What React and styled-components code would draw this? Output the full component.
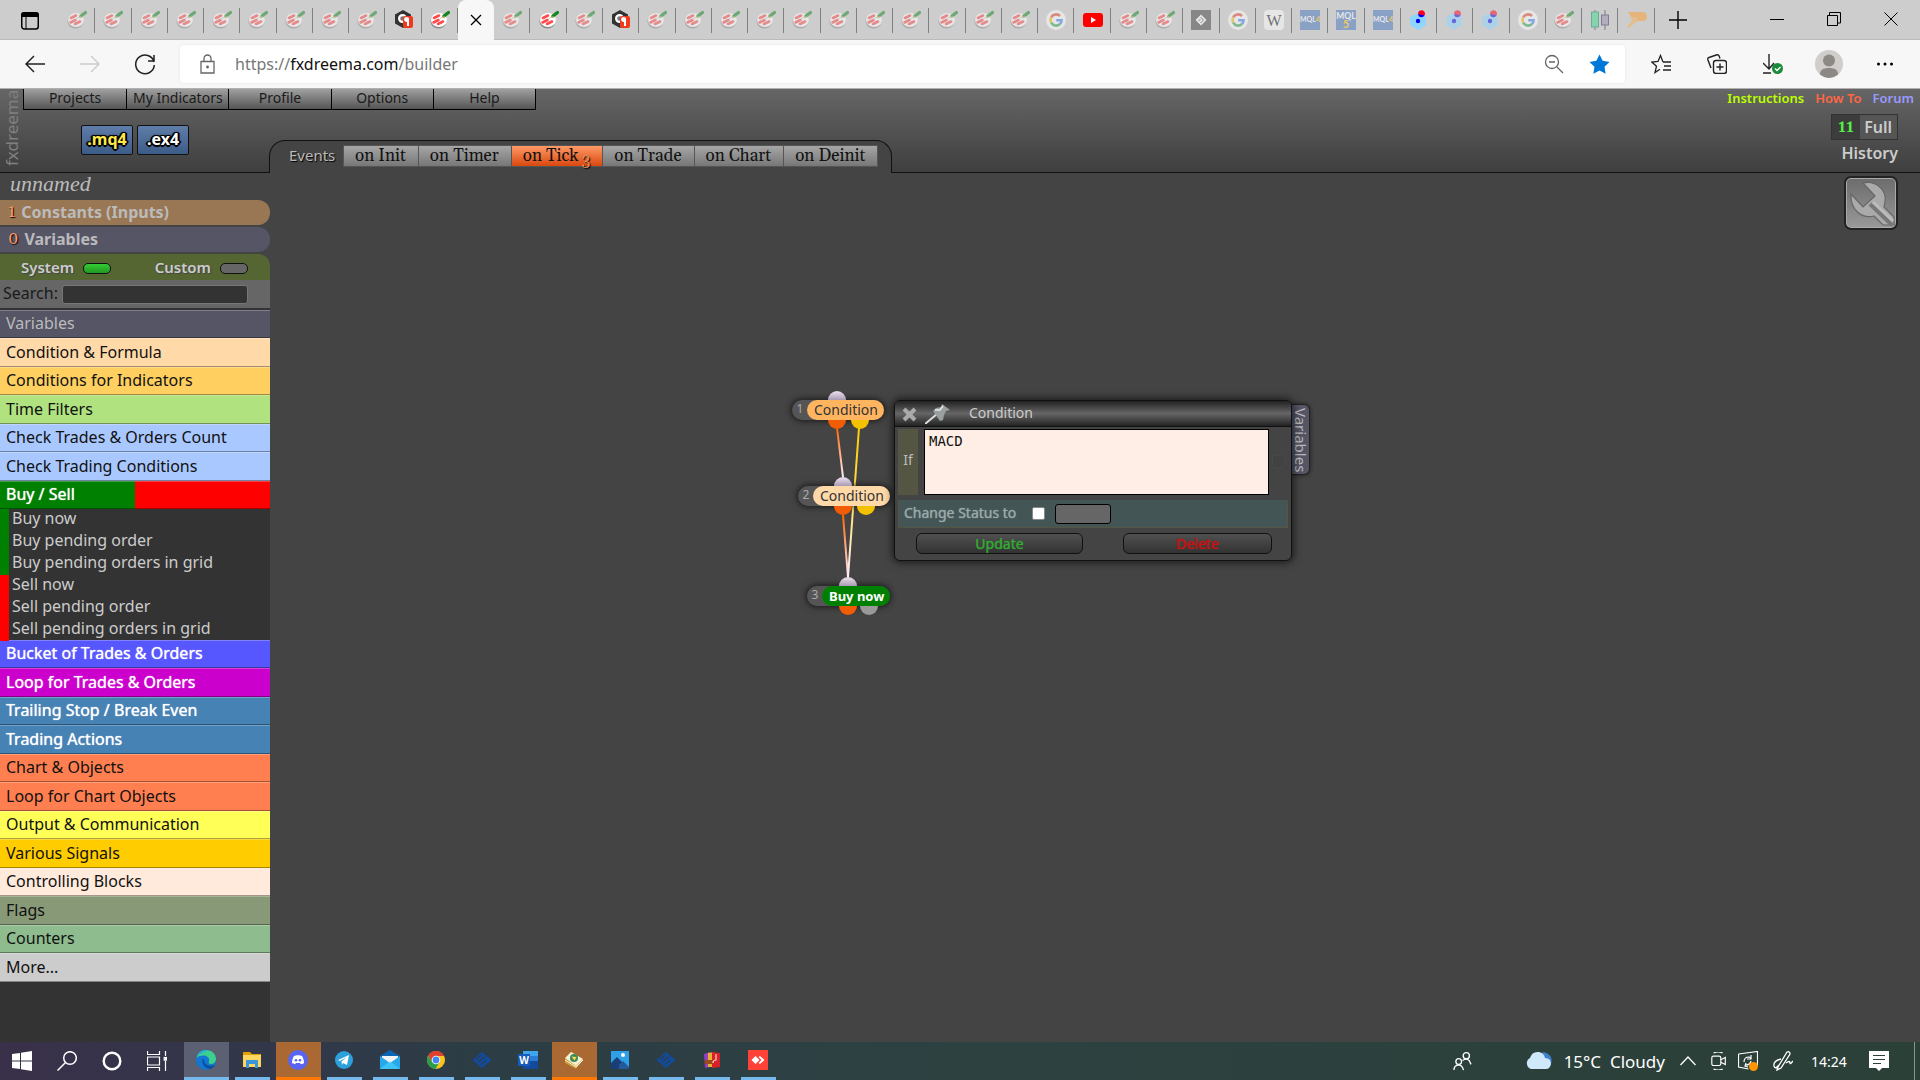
import React from "react";
import styled, { createGlobalStyle, css } from "styled-components";

const sans = `"Noto Sans", "Open Sans", sans-serif`;
const serif = `Georgia, Gelasio, "DejaVu Serif", serif`;

const GlobalStyle = createGlobalStyle`
  *, *::before, *::after { box-sizing: border-box; }
  body { margin: 0; background: #444; font-family: ${sans}; font-size: 14px; color: #bbb; }
  button, input, textarea, select { font: inherit; color: inherit; margin: 0; padding: 0; border: 0; background: none; }
  a { color: inherit; text-decoration: none; }
  ul { margin: 0; padding: 0; list-style: none; }
  svg { display: block; }
`;

const Screen = styled.div`
  min-height: 100vh;
  display: flex;
  flex-direction: column;
  overflow: hidden;
`;

/* ---------- browser chrome ---------- */

const TabStrip = styled.div`
  display: flex;
  height: 40px;
  background: #cdcdcd;
  box-shadow: inset 0 -1px 0 #bbb;
`;
const StripStart = styled.button`
  width: 59px;
  display: flex;
  align-items: center;
  justify-content: center;
  padding-top: 1px;
`;
const Tabs = styled.div`
  flex: 1;
  display: flex;
  min-width: 0;
`;
const Tab = styled.button`
  flex: 1 1 0;
  min-width: 0;
  display: flex;
  align-items: center;
  justify-content: center;
  position: relative;
  &::after {
    content: "";
    position: absolute;
    right: 0;
    top: 8px;
    width: 1px;
    height: 25px;
    background: #808080;
  }
  svg { opacity: ${(p) => (p.$dim ? 0.5 : 1)}; }
  ${(p) => p.$active && css`
    background: #f7f7f7;
    border-radius: 8px 8px 0 0;
    &::after { display: none; }
  `}
`;
const NewTab = styled.button`
  width: 45px;
  display: flex;
  align-items: center;
  justify-content: center;
  padding-bottom: 1px;
`;
const WindowButtons = styled.div`
  display: flex;
  width: 220px;
  padding-left: 48px;
`;
const WindowButton = styled.button`
  width: 57px;
  display: flex;
  align-items: center;
  justify-content: center;
  padding-bottom: 3px;
`;

const Toolbar = styled.div`
  display: flex;
  align-items: center;
  height: 49px;
  background: #f7f7f7;
  border-bottom: 1px solid #b0b0b0;
  padding-right: 7px;
`;
const NavButton = styled.button`
  width: 55px;
  height: 38px;
  display: flex;
  align-items: center;
  justify-content: center;
`;
const NavGroup = styled.div`
  display: flex;
  width: 180px;
  padding-left: 7px;
`;
const AddressBar = styled.div`
  flex: 1;
  height: 38px;
  display: flex;
  align-items: center;
  background: #fff;
  border-radius: 4px;
  padding: 0 15px 0 18px;
  box-shadow: 0 0 3px rgba(0, 0, 0, 0.08);
`;
const Url = styled.a`
  flex: 1;
  padding-left: 17px;
  font-size: 16px;
  color: #777;
  b { font-weight: 400; color: #111; }
`;
const BarIcons = styled.div`
  display: flex;
  gap: 25px;
`;
const PlainButton = styled.button`
  display: flex;
  align-items: center;
  justify-content: center;
`;
const ToolbarIcons = styled.div`
  display: flex;
  padding-left: 8px;
`;
const ToolbarButton = styled.button`
  width: 56px;
  height: 38px;
  display: flex;
  align-items: center;
  justify-content: center;
`;

/* ---------- application header ---------- */

const Header = styled.header`
  display: flex;
  height: 84px;
  background: linear-gradient(#666, #3e3e3e);
`;
const Brand = styled.div`
  width: 23px;
  writing-mode: vertical-rl;
  transform: rotate(180deg);
  border-top: 1px solid #111;
  padding-top: 6px;
  line-height: 23px;
  font-size: 17px;
  color: #808080;
  white-space: nowrap;
  overflow: hidden;
`;
const HeaderMain = styled.div`
  flex: 1;
  display: flex;
  flex-direction: column;
`;
const Menu = styled.nav`
  display: grid;
  grid-template-columns: repeat(5, 1fr);
  width: 513px;
  height: 21px;
  border: 1px solid #000;
  border-top: 0;
`;
const MenuButton = styled.button`
  font-size: 14px;
  line-height: 18px;
  padding-bottom: 2px;
  color: #1a1a1a;
  background: linear-gradient(#a0a0a0, #555);
  & + & { border-left: 1px solid #000; }
`;
const HeaderLower = styled.div`
  flex: 1;
  display: flex;
`;
const ExportTools = styled.div`
  width: 246px;
  display: flex;
  gap: 4px;
  padding: 15px 0 0 58px;
  border-bottom: 1px solid #111;
`;
const ExportButton = styled.button`
  width: 52px;
  height: 30px;
  border: 1px solid #111;
  border-radius: 2px;
  background: linear-gradient(#607da9, #3c5c88);
  color: ${(p) => p.$color};
  font-size: 16px;
  line-height: 26px;
  padding-bottom: 2px;
  font-weight: 700;
  text-shadow: 1px 1px 0 #000, -1px 1px 0 #000, 1px -1px 0 #000, -1px -1px 0 #000, 0 2px 0 #000, 2px 0 0 #000, -2px 0 0 #000, 0 0 3px #000;
`;
const EventBar = styled.div`
  align-self: flex-end;
  height: 33px;
  display: flex;
  padding: 4px 13px 0 19px;
  background: #444;
  border: 1px solid #111;
  border-bottom: 0;
  border-radius: 16px 16px 0 0;
`;
const EventLabel = styled.span`
  width: 54px;
  font-size: 15px;
  line-height: 20px;
  text-shadow: 1px 1px 1px #000;
`;
const EventTabs = styled.div`
  display: flex;
  border: 1px solid #555;
  height: 22px;
`;
const EventTab = styled.button`
  display: flex;
  padding: 0 12px 0 11px;
  font-family: ${serif};
  font-size: 17px;
  line-height: 20px;
  white-space: nowrap;
  color: #111;
  background: ${(p) => (p.$active ? "linear-gradient(#ff9a66, #d9480f)" : "linear-gradient(#a6a6a6, #777)")};
  & + & { border-left: 1px solid #555; }
`;
const EventCount = styled.span`
  margin-left: 3px;
  padding-top: 4px;
  font-size: 16px;
  font-variant-numeric: oldstyle-nums;
  color: #e0905c;
  text-shadow: 1px 1px 1px #000;
`;
const HeaderFill = styled.div`
  flex: 1;
  border-bottom: 1px solid #111;
`;
const HeaderSide = styled.div`
  display: flex;
  flex-direction: column;
  align-items: flex-end;
  border-bottom: 1px solid #111;
  padding-right: 6px;
`;
const HelpLinks = styled.nav`
  display: flex;
  gap: 11px;
  height: 20px;
  font-size: 13px;
  font-weight: 600;
  line-height: 18px;
`;
const HelpLink = styled.a`
  color: ${(p) => p.$color};
`;
const ModeButton = styled.button`
  display: flex;
  height: 26px;
  margin: 5px 16px 0 0;
  border: 1px solid #333;
  background: #555;
  font-weight: 600;
  font-size: 16px;
  line-height: 24px;
  color: #ccc;
  padding-right: 5px;
`;
const ModeCount = styled.span`
  width: 28px;
  margin-right: 4px;
  background: #3c3c3c;
  color: #5e4;
  font-family: ${serif};
  font-size: 17px;
  font-variant-numeric: oldstyle-nums;
`;
const HistoryButton = styled.button`
  margin-right: 16px;
  font-size: 16px;
  font-weight: 600;
  line-height: 26px;
  color: #ccc;
`;

/* ---------- workspace ---------- */

const Workspace = styled.div`
  flex: 1;
  display: flex;
`;
const Sidebar = styled.aside`
  width: 270px;
  background: #333;
`;
const ProjectName = styled.div`
  height: 27px;
  padding-left: 10px;
  background: #444;
  font-family: "Monotype Corsiva", "Liberation Serif", serif;
  font-style: italic;
  font-size: 22px;
  line-height: 22px;
  color: #bbb;
`;
const Sections = styled.div`
  background: #444;
`;
const SectionButton = styled.button`
  display: flex;
  width: 100%;
  height: 25px;
  margin-bottom: 2px;
  padding-left: 8px;
  gap: 6px;
  border-radius: 0 12px 12px 0;
  background: ${(p) => p.$bg};
  font-size: 16px;
  font-weight: 700;
  line-height: 24px;
`;
const SectionCount = styled.span`
  font-family: ${serif};
  font-size: 17px;
  font-weight: 400;
  font-variant-numeric: oldstyle-nums;
  color: #ff9966;
  text-shadow: 1px 1px 1px #000;
`;
const Sources = styled.div`
  display: flex;
  justify-content: space-between;
  height: 26px;
  padding: 0 22px 0 21px;
  border-top-right-radius: 12px;
  background: #563;
`;
const Source = styled.button`
  display: flex;
  align-items: center;
  gap: 9px;
  font-size: 15px;
  font-weight: 600;
  line-height: 26px;
  color: #ccc;
  text-shadow: 1px 1px 1px #444;
`;
const Lamp = styled.span`
  width: 28px;
  height: 11px;
  margin-top: 3px;
  border: 1px solid #111;
  border-radius: 5px;
  background: ${(p) => (p.$on ? "linear-gradient(#3c3, #292)" : "#666")};
`;
const SearchRow = styled.label`
  display: flex;
  align-items: center;
  gap: 4px;
  height: 28px;
  padding-left: 3px;
  background: #666;
  font-size: 16px;
  line-height: 22px;
  color: #1a1a1a;
`;
const SearchLabel = styled.span`
  padding-bottom: 2px;
`;
const SearchInput = styled.input`
  width: 186px;
  height: 19px;
  border: 1px solid #777;
  border-radius: 3px;
  background: #333;
`;
const Categories = styled.ul`
  & > li:nth-child(odd) { height: 28px; }
  & > li:nth-child(even) { height: 29px; }
`;
const FirstCategories = styled(Categories)`
  margin-top: 2px;
`;
const Category = styled.button`
  display: block;
  width: 100%;
  height: 100%;
  padding: 0 0 2px 6px;
  text-align: left;
  font-size: 16px;
  line-height: 24px;
  background: ${(p) => p.$bg};
  color: ${(p) => p.$color || "#111"};
  text-shadow: ${(p) => (p.$color === "#fff" ? "0 0 1px #fff" : "none")};
  border-top: 1px solid rgba(255, 255, 255, 0.25);
  border-bottom: 1px solid rgba(0, 0, 0, 0.35);
`;
const SubItems = styled.ul`
  display: grid;
  grid-template-rows: repeat(6, 1fr);
  height: 131px;
`;
const SubItem = styled.button`
  display: block;
  width: 100%;
  height: 100%;
  border-left: 9px solid ${(p) => p.$side};
  padding: 0 0 4px 3px;
  text-align: left;
  font-size: 16px;
  line-height: 18px;
  color: #ccc;
`;

const Canvas = styled.main`
  flex: 1;
  position: relative;
  background: #444;
`;
const Wires = styled.svg`
  position: absolute;
  left: 0;
  top: 0;
  width: 100%;
  height: 100%;
`;
const SettingsButton = styled.button`
  position: absolute;
  right: 22px;
  top: 3px;
  width: 54px;
  height: 54px;
  border: 2px solid #222;
  border-radius: 7px;
  background: linear-gradient(#6c6c6c, #999);
  box-shadow: inset 0 0 0 1px #aaa;
`;
const Node = styled.div`
  position: absolute;
  left: ${(p) => p.$x}px;
  top: ${(p) => p.$y}px;
  display: flex;
  height: 20px;
  border-radius: 10px;
  background: #555;
  box-shadow: 0 0 6px 1px rgba(0, 0, 0, 0.65);
`;
const NodeNumber = styled.span`
  width: 15px;
  padding-left: 1px;
  text-align: center;
  font-size: 12px;
  line-height: 18px;
  color: #aaa;
`;
const NodeLabel = styled.button`
  position: relative;
  padding: 0 6px 1px 7px;
  border-radius: 10px;
  background: ${(p) => p.$bg};
  color: ${(p) => p.$color || "#333"};
  font-size: ${(p) => (p.$strong ? 13 : 14)}px;
  line-height: 18px;
  font-weight: ${(p) => (p.$strong ? 700 : 400)};
  white-space: nowrap;
`;
const Knob = styled.span`
  position: absolute;
  left: ${(p) => p.$x}px;
  ${(p) => (p.$in ? "top: -9px; border-radius: 9px 9px 0 0;" : "top: 20px; border-radius: 0 0 9px 9px;")}
  width: 18px;
  height: 9px;
  background: ${(p) => p.$bg};
`;

const Panel = styled.section`
  position: absolute;
  left: 624px;
  top: 227px;
  width: 398px;
  border: 1px solid #111;
  border-radius: 6px;
  background: #444;
  box-shadow: 0 0 8px 1px rgba(0, 0, 0, 0.7);
`;
const PanelHeader = styled.div`
  display: flex;
  align-items: center;
  height: 26px;
  padding-left: 7px;
  border-bottom: 1px solid #111;
  border-radius: 5px 5px 0 0;
  background: linear-gradient(#222, #666 50%, #222);
`;
const PanelTitle = styled.h2`
  margin: 0 0 0 19px;
  padding-bottom: 2px;
  font-size: 14px;
  font-weight: 400;
  line-height: 22px;
  color: #ccc;
`;
const CloseButton = styled(PlainButton)`
  margin-right: 8px;
`;
const Condition = styled.label`
  display: flex;
  align-items: center;
  height: 67px;
  margin: 1px 0 0 3px;
  gap: 6px;
`;
const IfLabel = styled.span`
  width: 20px;
  height: 66px;
  background: #554;
  text-align: center;
  line-height: 62px;
`;
const ConditionText = styled.textarea`
  display: block;
  width: 345px;
  height: 66px;
  padding: 2px 4px;
  border: 1px solid #000;
  background: #ffeee6;
  color: #111;
  resize: none;
  font-family: "DejaVu Sans Mono", monospace;
  font-size: 14px;
  line-height: 18px;
`;
const GhostBox = styled.span`
  width: 13px;
  height: 13px;
  margin-left: -3px;
  border: 1px solid #484848;
  background: #424242;
  border-radius: 2px;
`;
const StatusRow = styled.div`
  display: flex;
  align-items: center;
  height: 28px;
  margin: 5px 3px 0;
  padding-left: 5px;
  border: 1px solid #554;
  border-top: 0;
  background: #455;
`;
const StatusLabel = styled.label`
  width: 128px;
  padding-bottom: 2px;
  color: #9aa;
  line-height: 24px;
  text-shadow: 0 0 1px #9aa;
`;
const StatusCheck = styled.input`
  appearance: none;
  width: 13px;
  height: 13px;
  margin-right: 10px;
  background: #fff;
  border: 1px solid #888;
  border-radius: 2px;
`;
const StatusSelect = styled.select`
  appearance: none;
  width: 56px;
  height: 20px;
  border: 1px solid #000;
  border-radius: 3px;
  background: #666;
`;
const PanelActions = styled.div`
  display: flex;
  justify-content: space-between;
  padding: 5px 19px 6px 21px;
`;
const ActionButton = styled.button`
  width: ${(p) => (p.$wide ? 167 : 149)}px;
  height: 21px;
  border: 1px solid #111;
  border-radius: 6px;
  background: linear-gradient(#505050, #333);
  color: ${(p) => p.$color};
  line-height: 19px;
  text-shadow: 0 0 1px ${(p) => p.$color};
`;
const SideTab = styled.button`
  position: absolute;
  left: 1022px;
  top: 231px;
  width: 18px;
  height: 71px;
  padding-top: 1px;
  border: 1px solid #222;
  border-left: 0;
  border-radius: 0 6px 6px 0;
  background: #556;
  box-shadow: 0 0 4px rgba(0, 0, 0, 0.6);
  writing-mode: vertical-rl;
  font-size: 15px;
  line-height: 16px;
  white-space: nowrap;
`;

/* ---------- taskbar ---------- */

const Taskbar = styled.footer`
  display: flex;
  height: 38px;
  background: linear-gradient(90deg, #393049, #31384a 15%, #2c3d45 25%, #2d4141 50%, #2b4037);
  color: #fff;
`;
const SystemButtons = styled.div`
  display: flex;
  width: 184px;
  padding: 0 5px 0 0;
`;
const SystemButton = styled.button`
  flex: 1;
  display: flex;
  align-items: center;
  justify-content: center;
  padding-bottom: 1px;
`;
const Apps = styled.div`
  display: flex;
  gap: 1px;
`;
const AppButton = styled.button`
  width: 45px;
  display: flex;
  flex-direction: column;
  align-items: center;
  justify-content: space-between;
  padding-top: 8px;
  background: ${(p) => (p.$state === "current" ? "#5b6072" : p.$state === "alert" ? "#aa6932" : "transparent")};
  svg { margin-right: 2px; }
  &::after {
    content: "";
    width: ${(p) => (p.$state ? 45 : 35)}px;
    height: 3px;
    background: ${(p) => (p.$state === "alert" ? "#ff7700" : "#76b9ed")};
  }
`;
const Tray = styled.div`
  margin-left: auto;
  display: flex;
  align-items: center;
  padding-right: 5px;
`;
const TrayItem = styled.button`
  width: ${(p) => p.$w}px;
  display: flex;
  align-items: center;
  justify-content: center;
  white-space: nowrap;
`;
const Weather = styled.button`
  display: flex;
  align-items: center;
  gap: 12px;
  font-size: 17px;
  padding: 0 3px 0 52px;
`;
const Clock = styled.time`
  width: 58px;
  text-align: center;
  font-size: 14px;
`;
const ShowDesktop = styled.button`
  width: 1px;
  height: 38px;
  margin-left: 14px;
  background: #8a958f;
`;

/* ---------- drawings ---------- */

const Line = ({ s = 20, vb = 20, w = 1.5, c = "#222", children }) => (
  <svg width={s} height={s} viewBox={`0 0 ${vb} ${vb}`} fill="none" stroke={c} strokeWidth={w}>{children}</svg>
);

const Fx = () => (
  <svg width="20" height="20" viewBox="0 0 20 20">
    <ellipse cx="8.500" cy="11.500" rx="8" ry="7" fill="#8a8a8a" />
    <ellipse cx="9" cy="10" rx="8" ry="7" fill="#fff" />
    <path d="M4 8 9 5.500M3.500 12.500l5-2.500M8 14l5-2.500" stroke="#ff4b4b" strokeWidth="2.600" strokeLinecap="round" />
    <path d="m9 9.500 5-4" stroke="#ccc" strokeWidth="1" />
    <path d="m14 6 4.500-3.500" stroke="#12851f" strokeWidth="3.200" strokeLinecap="round" />
    <path d="m12 7.800 2.500-1.300" stroke="#e8c040" strokeWidth="1" />
  </svg>
);
const HexMark = () => (
  <svg width="20" height="20" viewBox="0 0 20 20">
    <path d="M9 0 17 4.500v9L9 18 1 13.500v-9Z" fill="#333" />
    <circle cx="8.500" cy="8.500" r="3.400" fill="#777" stroke="#fff" strokeWidth="2.200" />
    <path d="M9 8q0-2 2-2h6q2 0 2 2v8q0 2-2 2h-6q-2 0-2-2Z" fill="#f03a20" />
    <circle cx="12.500" cy="9.500" r="2.400" fill="#fff" /><path d="M14 8v8" stroke="#fff" strokeWidth="2" />
  </svg>
);
const Google = () => (
  <svg width="20" height="20" viewBox="0 0 20 20" fill="none" strokeWidth="2.600">
    <circle cx="10" cy="10" r="10" fill="#fff" />
    <path d="M14 6A5.600 5.600 0 0 0 5.200 7.300" stroke="#ea4335" />
    <path d="M5.200 7.300a5.600 5.600 0 0 0 0 5.400" stroke="#fbbc05" />
    <path d="M5.200 12.700a5.600 5.600 0 0 0 8.500 1.600" stroke="#34a853" />
    <path d="M13.700 14.300a5.600 5.600 0 0 0 1.900-4.100H10.200" stroke="#4285f4" />
  </svg>
);
const YouTube = () => (
  <svg width="20" height="20" viewBox="0 0 20 20"><rect y="3" width="20" height="14" rx="3" fill="#f00" /><path d="m8 7 5 3-5 3Z" fill="#fff" /></svg>
);
const Diamond = () => (
  <svg width="20" height="20" viewBox="0 0 20 20"><rect width="20" height="20" fill="#444" /><path d="m10 4.500 5.500 5.500-5.500 5.500L4.500 10Z" fill="#fff" /><path d="m9.500 7 3 3-3 3M9.500 9l-2 2" stroke="#444" fill="none" /></svg>
);
const Wiki = () => (
  <svg width="20" height="20" viewBox="0 0 20 20"><rect width="20" height="20" rx="4" fill="#fff" /><text x="10" y="15.500" fontSize="16" fontFamily="Liberation Serif" textAnchor="middle" fill="#111">W</text></svg>
);
const Mql4 = () => (
  <svg width="20" height="20" viewBox="0 0 20 20"><rect width="20" height="20" fill="#4a76c0" /><text x="10" y="12" fontSize="7" fontWeight="700" fontFamily="Lato" textAnchor="middle" fill="#fff">MQL<tspan fill="#ffc400">4</tspan></text></svg>
);
const Mql5 = () => (
  <svg width="20" height="20" viewBox="0 0 20 20"><rect width="20" height="20" fill="#4a76c0" /><text x="10" y="8.500" fontSize="8.500" fontWeight="700" fontFamily="Lato" textAnchor="middle" fill="#fff">MQL</text><text x="10" y="18" fontSize="11" fontWeight="700" fontFamily="Lato" textAnchor="middle" fill="#ffc400">5</text></svg>
);
const Hexagon = () => (
  <svg width="20" height="20" viewBox="0 0 20 20"><path d="m9 3 8 4v8l-8 5-8-5V7Z" fill="#8fd6ff" /><path d="M9 4.500a3.500 3.500 0 0 0 6.500 1L12 3Z" fill="#00e" /><path d="M9 4a3.500 3.500 0 1 1 6.500 1.500Z" fill="#f02" /><circle cx="9" cy="11" r="2.200" fill="#00e" /></svg>
);
const Candles = () => (
  <svg width="20" height="20" viewBox="0 0 20 20"><path d="M5 0v20M15 0v20" stroke="#333" /><rect x="1.500" y="2" width="7" height="15" fill="#3ddc91" stroke="#186" /><rect x="11.500" y="5" width="7" height="10" fill="#9a8fb0" stroke="#335" /></svg>
);
const Ribbon = () => (
  <svg width="20" height="20" viewBox="0 0 20 20"><path d="M1 2h14q5 0 5 4.500T15 11h-4l-2-4H4Z" fill="#ff9b2e" /><path d="M4 7h5l2 4-3 2-6 5-2-2 5-5Z" fill="#f9b050" /></svg>
);

const f = (icon, dim = true) => ({ icon, dim });
const times = (n, icon) => Array.from({ length: n }, () => f(icon));
const tabs = [
  ...times(9, Fx), f(HexMark, false), f(Fx, false), { active: true },
  f(Fx), f(Fx, false), f(Fx), f(HexMark, false), ...times(11, Fx),
  f(Google), f(YouTube, false), f(Fx), f(Fx), f(Diamond), f(Google), f(Wiki),
  f(Mql4), f(Mql5), f(Mql4), f(Hexagon, false), f(Hexagon), f(Hexagon),
  f(Google), f(Fx), f(Candles), f(Ribbon),
];

const upper = [
  ["Variables", "#556", "#bbb"],
  ["Condition & Formula", "#ffd9a8"],
  ["Conditions for Indicators", "#ffd060"],
  ["Time Filters", "#b0e380"],
  ["Check Trades & Orders Count", "#a9c8ff"],
  ["Check Trading Conditions", "#a9c8ff"],
  ["Buy / Sell", "linear-gradient(90deg, #008000 50%, #f00 50%)", "#fff"],
];
const subItems = [
  ["Buy now", "green"], ["Buy pending order", "green"], ["Buy pending orders in grid", "green"],
  ["Sell now", "red"], ["Sell pending order", "red"], ["Sell pending orders in grid", "red"],
];
const lower = [
  ["Bucket of Trades & Orders", "#5757ff", "#fff"],
  ["Loop for Trades & Orders", "#c0c", "#fff"],
  ["Trailing Stop / Break Even", "#4682b4", "#fff"],
  ["Trading Actions", "#4682b4", "#fff"],
  ["Chart & Objects", "#ff7f50"],
  ["Loop for Chart Objects", "#ff7f50"],
  ["Output & Communication", "#ffff57"],
  ["Various Signals", "#fc0"],
  ["Controlling Blocks", "#ffeadc"],
  ["Flags", "#897"],
  ["Counters", "#8fbc8f"],
  ["More...", "#ccc"],
];

const BlueDiamond = () => (
  <svg width="20" height="20" viewBox="0 0 20 20"><path d="m10 2 9.500 8-9.500 8-9.500-8Z" fill="#124aa0" /><path d="m4 9.500 5-4M6 12l7-5.500M9 14.500l5-4" stroke="#2d3f45" strokeWidth="1.200" fill="none" /></svg>
);
const apps = [
  ["Edge", "current", () => (
    <svg width="20" height="20" viewBox="0 0 20 20">
      <circle cx="10" cy="10" r="10" fill="#1177d0" />
      <path d="M.5 8C2 2 6 0 10 0c6 0 10 4 10 9 0 3-2.500 5-5 5-2 0-3-1-2-2.500C14 8 11 5.500 7.500 5.500 4 5.500 1.500 6.500.5 8Z" fill="#3ccf8e" />
      <path d="M.5 8C2 2 6 0 10 0l3 .5C8 1 3 4 .5 8Z" fill="#29a8e0" />
      <path d="M7 8c-2 5 1 10 7 11 2-.6 4-2 5-4-5 2-11 0-11-5Z" fill="#0c4fa0" />
    </svg>)],
  ["Explorer", "", () => (
    <svg width="20" height="20" viewBox="0 0 20 20"><path d="M1 2h7l2 2h9v4H1Z" fill="#e0a100" /><path d="M1 5h18v12H1Z" fill="#ffd75e" /><path d="M4 18v-8h12v8h-3v-4H7v4Z" fill="#3a96dd" /></svg>)],
  ["Discord", "alert", () => (
    <svg width="20" height="20" viewBox="0 0 20 20"><circle cx="10" cy="10" r="10" fill="#5865f2" /><path d="M6 6c2-1 6-1 8 0 1.500 2 2 5 2 7-1 1-2 1-3 1.200L12 13H8l-1 1.200C6 14 5 14 4 13c0-2 .5-5 2-7Z" fill="#fff" /><circle cx="8" cy="10.200" r="1.300" fill="#5865f2" /><circle cx="12" cy="10.200" r="1.300" fill="#5865f2" /></svg>)],
  ["Telegram", "", () => (
    <svg width="20" height="20" viewBox="0 0 20 20"><circle cx="10" cy="10" r="9" fill="#2ba0da" /><path d="m4 10 11-5-2 10-4-2-1 2-.5-3.500L13 7l-7 4Z" fill="#fff" /></svg>)],
  ["Mail", "", () => (
    <svg width="20" height="20" viewBox="0 0 20 20"><path d="m0 6 10-6 10 6v13H0Z" fill="#0a64b4" /><path d="M2 6h16v7H2Z" fill="#f3f3f3" /><path d="m0 6 10 7 10-7v13H0Z" fill="#28a8ea" /><path d="m0 19 10-8 10 8Z" fill="#50d9ff" opacity=".55" /></svg>)],
  ["Chrome", "", () => (
    <svg width="20" height="20" viewBox="0 0 20 20"><circle cx="10" cy="10" r="9" fill="#fbc31c" /><path d="M2.200 5.500A9 9 0 0 1 18 6h-8l-4 6Z" fill="#e0402f" /><path d="M2.200 5.500A9 9 0 0 0 9.500 19l4-7H6Z" fill="#2a9d4c" /><circle cx="10" cy="10" r="4.300" fill="#fff" /><circle cx="10" cy="10" r="3.400" fill="#4285f4" /></svg>)],
  ["Trader", "", BlueDiamond],
  ["Word", "", () => (
    <svg width="20" height="20" viewBox="0 0 20 20"><path d="M5 1h15v5H5Z" fill="#41a5ee" /><path d="M5 6h15v5H5Z" fill="#2b7cd3" /><path d="M5 11h15v8H5Z" fill="#134a9c" /><rect y="4" width="12" height="12" fill="#185abd" /><text x="6" y="13.500" fontSize="10" fontWeight="700" fontFamily="Open Sans" textAnchor="middle" fill="#fff">W</text></svg>)],
  ["MetaEditor", "alert", () => (
    <svg width="20" height="20" viewBox="0 0 20 20"><path d="m1 9 7-7 11 8-7 9L1 13Z" fill="#c99a3a" /><path d="m1 8 6-6 12 7-7 7Z" fill="#f6efd0" /><path d="m1 10 11 7 7-7" stroke="#fff8dc" fill="none" /><circle cx="10" cy="8" r="4" fill="#388a5a" /><path d="m7.500 6.500 5 .5-2 3.500Z" fill="#ffd84a" /></svg>)],
  ["Photos", "", () => (
    <svg width="20" height="20" viewBox="0 0 20 20"><path d="M1 1h18v18H1Z" fill="#2f9fe8" /><circle cx="13" cy="5" r="2" fill="#fff" /><path d="m1 13 6-6 12 12H1Z" fill="#1a3e78" /><path d="m9 15 4-4 6 6v2H9Z" fill="#245a9c" /></svg>)],
  ["Trader two", "", BlueDiamond],
  ["Archive", "", () => (
    <svg width="20" height="20" viewBox="0 0 20 20"><path d="m2 4 6-2v15l-5 1Z" fill="#9040c0" /><path d="m6 3 6-1v15H6Z" fill="#e8b030" /><path d="m10 2 8 1v14l-8 1Z" fill="#d8202a" /><path d="M3 10h8v4H3Z" fill="#a04818" /><path d="M14 4v6q-3 0-3 3" stroke="#f8d8b0" strokeWidth="1.200" fill="none" /></svg>)],
  ["AnyDesk", "", () => (
    <svg width="20" height="20" viewBox="0 0 20 20"><rect width="20" height="20" fill="#ff4238" /><path d="m7.500 6 4 4-4 4-4-4ZM10.500 7l1.500-1 4.500 4-4.500 4-1.500-1 3-3Z" fill="#fff" /></svg>)],
];

const lilac = "linear-gradient(#f0e2f4, #aa9cb0)";

export default function App() {
  return (
    <Screen>
      <GlobalStyle />
      <TabStrip>
        <StripStart aria-label="Tab actions">
          <svg width="20" height="20" viewBox="0 0 20 20"><rect x="1.750" y="2" width="16.500" height="16" rx="2.500" fill="none" stroke="#000" strokeWidth="1.500" /><path d="M1 6V4q0-3 3-3h12q3 0 3 3v2Z" /><path d="M6 6v12" stroke="#000" /></svg>
        </StripStart>
        <Tabs>
          {tabs.map((t, i) => (
            <Tab key={i} $active={t.active} $dim={t.dim} aria-label={`Tab ${i + 1}`}>
              {t.active ? <Line s={12} vb={12} c="#000" w={1.300}><path d="m1 1 10 10M11 1 1 11" /></Line> : <t.icon />}
            </Tab>
          ))}
        </Tabs>
        <NewTab aria-label="New tab"><Line s={18} vb={18} c="#000" w={1.400}><path d="M9 0v18M0 9h18" /></Line></NewTab>
        <WindowButtons>
          <WindowButton aria-label="Minimise"><Line s={14} vb={14} c="#000" w={1}><path d="M0 7.500h14" /></Line></WindowButton>
          <WindowButton aria-label="Restore"><Line s={14} vb={14} c="#000" w={1}><path d="M.5 3.500h10v10H.5ZM2.500 3V.5h11v10.500H11" /></Line></WindowButton>
          <WindowButton aria-label="Close"><Line s={14} vb={14} c="#000" w={1}><path d="m.5.5 13 13M13.500.5l-13 13" /></Line></WindowButton>
        </WindowButtons>
      </TabStrip>

      <Toolbar>
        <NavGroup>
          <NavButton aria-label="Back"><Line><path d="M20 10H1M9 2l-8 8 8 8" /></Line></NavButton>
          <NavButton aria-label="Forward"><Line c="#ccc"><path d="M0 10h19M11 2l8 8-8 8" /></Line></NavButton>
          <NavButton aria-label="Reload"><Line s={22} vb={22}><path d="M20 9a9.300 9.300 0 1 0 .3 3M20 2v6h-6" /></Line></NavButton>
        </NavGroup>
        <AddressBar>
          <Line c="#666" w={1.300}><path d="M3 7.500h13v11.500H3ZM6 7V4.500a3.500 3.500 0 0 1 7 0V7" /><circle cx="9.500" cy="13" r=".8" fill="#666" /></Line>
          <Url href="https://fxdreema.com/builder">https://<b>fxdreema.com</b>/builder</Url>
          <BarIcons>
            <PlainButton aria-label="Zoom out"><Line c="#666" w={1.300}><circle cx="8" cy="8" r="6.500" /><path d="m13 13 6 6M5 8h6" /></Line></PlainButton>
            <PlainButton aria-label="Favourite"><svg width="21" height="21" viewBox="0 0 20 20"><path d="m10 .5 3 6 6.500 1-4.700 4.700 1 6.600L10 15.700l-5.800 3.100 1-6.600L.5 7.500l6.500-1Z" fill="#0078d7" /></svg></PlainButton>
          </BarIcons>
        </AddressBar>
        <ToolbarIcons>
          <ToolbarButton aria-label="Favourites"><Line w={1.300}><path d="M12 8 9.500 1.500 7 7.500.8 8l4.700 4.200L4 18.500l5-3.200M12 8h8M13 12h7M12 16h8" /></Line></ToolbarButton>
          <ToolbarButton aria-label="Collections"><Line w={1.400}><rect x="6.500" y="6.500" width="13" height="13" rx="2.500" /><path d="M13 9.500v7M9.500 13h7M4 14 .8 5.500Q.5 4 2 3.500L10 .8q1.500-.3 2 1l1 2.700" /></Line></ToolbarButton>
          <ToolbarButton aria-label="Downloads"><Line w={1.400}><path d="M6 0v15M0 9l6 6 5-6M0 19h8" /><circle cx="14.500" cy="14.500" r="5.500" fill="#1b8a3a" stroke="none" /><path d="m12 14.500 2 2 3.500-3.500" stroke="#fff" /></Line></ToolbarButton>
          <ToolbarButton aria-label="Profile"><svg width="28" height="28" viewBox="0 0 28 28"><circle cx="14" cy="14" r="14" fill="#d0cecb" /><circle cx="14" cy="10.500" r="6" fill="#8c8884" /><path d="M5 24.500C5 20 8 18 14 18s9 2 9 6.500q-9 7-18 0Z" fill="#8c8884" /></svg></ToolbarButton>
          <ToolbarButton aria-label="Menu"><svg width="18" height="4" viewBox="0 0 18 4"><circle cx="2.500" cy="2" r="1.500" /><circle cx="9" cy="2" r="1.500" /><circle cx="15.500" cy="2" r="1.500" /></svg></ToolbarButton>
        </ToolbarIcons>
      </Toolbar>

      <Header>
        <Brand>fxdreema</Brand>
        <HeaderMain>
          <Menu>
            {["Projects", "My Indicators", "Profile", "Options", "Help"].map((m) => <MenuButton key={m}>{m}</MenuButton>)}
          </Menu>
          <HeaderLower>
            <ExportTools>
              <ExportButton $color="#ffe94a">.mq4</ExportButton>
              <ExportButton $color="#fff">.ex4</ExportButton>
            </ExportTools>
            <EventBar>
              <EventLabel>Events</EventLabel>
              <EventTabs>
                <EventTab>on Init</EventTab>
                <EventTab>on Timer</EventTab>
                <EventTab $active>on Tick<EventCount>3</EventCount></EventTab>
                <EventTab>on Trade</EventTab>
                <EventTab>on Chart</EventTab>
                <EventTab>on Deinit</EventTab>
              </EventTabs>
            </EventBar>
            <HeaderFill />
          </HeaderLower>
        </HeaderMain>
        <HeaderSide>
          <HelpLinks>
            <HelpLink href="#instructions" $color="#bf0">Instructions</HelpLink>
            <HelpLink href="#howto" $color="#f64">How To</HelpLink>
            <HelpLink href="#forum" $color="#99f">Forum</HelpLink>
          </HelpLinks>
          <ModeButton><ModeCount>11</ModeCount>Full</ModeButton>
          <HistoryButton>History</HistoryButton>
        </HeaderSide>
      </Header>

      <Workspace>
        <Sidebar>
          <ProjectName>unnamed</ProjectName>
          <Sections>
            <SectionButton $bg="#975"><SectionCount>1</SectionCount>Constants (Inputs)</SectionButton>
            <SectionButton $bg="#556"><SectionCount>0</SectionCount>Variables</SectionButton>
            <Sources>
              <Source>System<Lamp $on /></Source>
              <Source>Custom<Lamp /></Source>
            </Sources>
          </Sections>
          <SearchRow><SearchLabel>Search:</SearchLabel><SearchInput type="text" /></SearchRow>
          <FirstCategories>
            {upper.map(([t, bg, c]) => <li key={t}><Category $bg={bg} $color={c}>{t}</Category></li>)}
          </FirstCategories>
          <SubItems>
            {subItems.map(([t, side]) => <li key={t}><SubItem $side={side}>{t}</SubItem></li>)}
          </SubItems>
          <Categories>
            {lower.map(([t, bg, c]) => <li key={t}><Category $bg={bg} $color={c}>{t}</Category></li>)}
          </Categories>
        </Sidebar>

        <Canvas>
          <Wires>
            <defs>
              <linearGradient id="w1" gradientUnits="userSpaceOnUse" x1="0" y1="255" x2="0" y2="304"><stop offset="0" stopColor="#f60" /><stop offset="1" stopColor="#fef" /></linearGradient>
              <linearGradient id="w2" gradientUnits="userSpaceOnUse" x1="0" y1="255" x2="0" y2="404"><stop offset="0" stopColor="#fc0" /><stop offset=".4" stopColor="#fd4" /><stop offset="1" stopColor="#fef" /></linearGradient>
              <linearGradient id="w3" gradientUnits="userSpaceOnUse" x1="0" y1="342" x2="0" y2="404"><stop offset="0" stopColor="#f60" /><stop offset="1" stopColor="#fef" /></linearGradient>
            </defs>
            <g fill="none" strokeWidth="2">
              <path d="m567 255 6 49" stroke="url(#w1)" />
              <path d="m589 255-11 149" stroke="url(#w2)" />
              <path d="m573 342 5 62" stroke="url(#w3)" />
            </g>
          </Wires>
          <Node $x={522} $y={227}>
            <Knob $in $x={36} $bg={lilac} /><Knob $x={36} $bg="#f25c05" /><Knob $x={59} $bg="#f2c200" />
            <NodeNumber>1</NodeNumber><NodeLabel $bg="#ffb560">Condition</NodeLabel>
          </Node>
          <Node $x={528} $y={313}>
            <Knob $in $x={36} $bg={lilac} /><Knob $x={36} $bg="#f25c05" /><Knob $x={59} $bg="#f2c200" />
            <NodeNumber>2</NodeNumber><NodeLabel $bg="#ffd9a8">Condition</NodeLabel>
          </Node>
          <Node $x={537} $y={413}>
            <Knob $in $x={32} $bg={lilac} /><Knob $x={32} $bg="#f25c05" /><Knob $x={53} $bg="#999" />
            <NodeNumber>3</NodeNumber><NodeLabel $bg="#008000" $color="#fff" $strong>Buy now</NodeLabel>
          </Node>

          <SideTab>Variables</SideTab>
          <Panel>
            <PanelHeader>
              <CloseButton aria-label="Close"><svg width="15" height="16" viewBox="0 0 15 16"><path d="m2 3 11 11M13 3 2 14" stroke="#aaa" strokeWidth="4" /></svg></CloseButton>
              <PlainButton aria-label="Pin"><svg width="25" height="20" viewBox="0 0 25 20"><path d="m0 20 12-10" stroke="#ddd" strokeWidth="2" /><path d="m8 7 3-3 5-1 1-3 8 6-4 1-2 4-1 5-3 1Z" fill="#9aa0a0" /><path d="m10 6 5 0 3-4" stroke="#e4e8e8" strokeWidth="1.500" fill="none" /></svg></PlainButton>
              <PanelTitle>Condition</PanelTitle>
            </PanelHeader>
            <Condition><IfLabel>If</IfLabel><ConditionText defaultValue="MACD" spellCheck={false} /><GhostBox /></Condition>
            <StatusRow>
              <StatusLabel htmlFor="status-on">Change Status to</StatusLabel>
              <StatusCheck id="status-on" type="checkbox" />
              <StatusSelect aria-label="Status" />
            </StatusRow>
            <PanelActions>
              <ActionButton $wide $color="#3a3">Update</ActionButton>
              <ActionButton $color="#c11">Delete</ActionButton>
            </PanelActions>
          </Panel>

          <SettingsButton aria-label="Settings">
            <svg width="50" height="50" viewBox="0 0 50 50">
              <path d="M17 5c12-3 24 6 22 19l-1 5 10 10v8H37l-9-9c-11 3-24-5-23-22l12 13 12-11Z" fill="#aaa" stroke="#666" strokeWidth="1.200" />
              <path d="m24 26 22 21" stroke="#777" strokeWidth="4" />
              <path d="m27 24 20 19" stroke="#bbb" strokeWidth="3" />
            </svg>
          </SettingsButton>
        </Canvas>
      </Workspace>

      <Taskbar>
        <SystemButtons>
          <SystemButton aria-label="Start"><svg width="20" height="20" viewBox="0 0 20 20" fill="#fff"><path d="m0 3 8-1v7.500H0ZM9 1.800 20 0v9.500H9ZM0 10.500h8V18l-8-1ZM9 10.500h11V20L9 18.300Z" /></svg></SystemButton>
          <SystemButton aria-label="Search"><Line c="#fff"><circle cx="13" cy="7" r="6.300" /><path d="m8.500 11.500-8 8" /></Line></SystemButton>
          <SystemButton aria-label="Cortana"><Line c="#fff" w={2.400}><circle cx="10" cy="10" r="8.300" /></Line></SystemButton>
          <SystemButton aria-label="Task view"><Line c="#fff" w={1.200}><path d="M.5 0v3.500h12V0M.5 6h12v8H.5ZM.5 20v-3.500h12V20M18.500 0v5M18.500 10v10" /><rect x="17.200" y="6.500" width="2.600" height="2.600" fill="#fff" /></Line></SystemButton>
        </SystemButtons>
        <Apps>
          {apps.map(([name, state, Icon]) => <AppButton key={name} $state={state} aria-label={name}><Icon /></AppButton>)}
        </Apps>
        <Tray>
          <TrayItem $w={20} aria-label="People"><Line s={19} c="#fff" w={1.400}><circle cx="14" cy="4" r="3.300" /><circle cx="6" cy="10" r="3" /><path d="M10 9q4-3 7 0l2 4M1 19q0-5 5-5.500 4 .5 5 5.500" /></Line></TrayItem>
          <Weather>
            <svg width="27" height="20" viewBox="0 0 27 20"><path d="M14 4q4-5 9-1 5 3 3 10H14Z" fill="#3f83cf" /><path d="M6 18a6 6 0 0 1-1-11Q7 0 14 1q5 1 6 6 6 0 6 6-1 5-5 5Z" fill="#cfe8fa" /></svg>
            <span>15°C&nbsp; Cloudy</span>
          </Weather>
          <TrayItem $w={40} aria-label="Hidden icons"><svg width="16" height="10" viewBox="0 0 16 10"><path d="m.5 9 7.500-8L15.500 9" fill="none" stroke="#fff" strokeWidth="1.300" /></svg></TrayItem>
          <TrayItem $w={22} aria-label="Camera"><Line s={18} c="#fff" w={1.300}><path d="M4 1q5-2 10 0M4 19q5 2 10 0" /><rect x="2" y="4.500" width="10" height="10.500" rx="2" /><path d="m12 8.500 5-2.500v8l-5-2.500" /></Line></TrayItem>
          <TrayItem $w={36} aria-label="Updates"><Line c="#fff" w={1.200}><path d="m.5 3 19-2.500v15M.5 3v13l10 2M6 11q0-5 5-5l2 1M13 4v4H9M13 10q-1 4-5 4M8 12l-1 3 3 1" /><circle cx="15.500" cy="15.500" r="4.500" fill="#ff9500" stroke="none" /></Line></TrayItem>
          <TrayItem $w={34} aria-label="Pen"><Line c="#fff" w={1.300}><path d="M5 16 14 1q3-1 3 2L8 17l-4 2ZM8 8q-8 2-7 7 1 4 5-1M13 12q4-3 4 0 0 2 3-2" /></Line></TrayItem>
          <Clock>14:24</Clock>
          <TrayItem $w={42} aria-label="Notifications"><svg width="20" height="20" viewBox="0 0 20 20"><path d="M0 0h20v17h-7l-3 3-3-3H0Z" fill="#fff" /><path d="M4 4.500h12M4 8.500h12M4 12.500h8" stroke="#2b4037" strokeWidth="1.200" /></svg></TrayItem>
          <ShowDesktop aria-label="Show desktop" />
        </Tray>
      </Taskbar>
    </Screen>
  );
}
